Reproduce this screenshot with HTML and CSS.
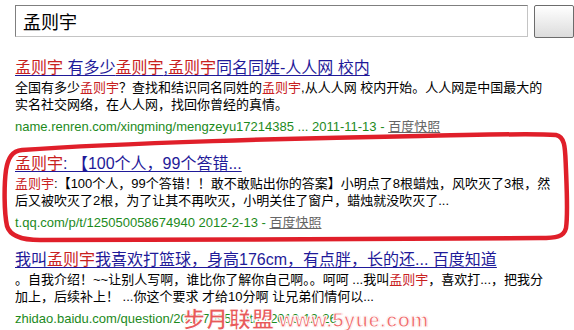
FILE: index.html
```html
<!DOCTYPE html>
<html lang="zh-CN">
<head>
<meta charset="utf-8">
<title>孟则宇 - 搜索结果</title>
<link rel="stylesheet" href="styles.css">
</head>
<body>
<div class="page">
  <div class="search">
    <div class="input">孟则宇</div>
    <div class="btn"></div>
  </div>

  <div class="results">
    <div class="result">
      <a class="title"><em>孟则宇</em> 有多少<em>孟则宇</em>,<em>孟则宇</em>同名同姓-人人网 校内</a>
      <div class="abs">全国有多少<em>孟则宇</em>？查找和结识同名同姓的<em>孟则宇</em>,从人人网 校内开始。人人网是中国最大的<br>实名社交网络，在人人网，找回你曾经的真情。</div>
      <div class="url">name.renren.com/xingming/mengzeyu17214385 ... 2011-11-13 - <a class="cache">百度快照</a></div>
    </div>

    <div class="result">
      <a class="title"><em>孟则宇</em>: 【100个人，99个答错...</a>
      <div class="abs"><em>孟则宇</em>:【100个人，99个答错！！敢不敢贴出你的答案】小明点了8根蜡烛，风吹灭了3根，然<br>后又被吹灭了2根，为了让其不再吹灭，小明关住了窗户，蜡烛就没吹灭了...</div>
      <div class="url">t.qq.com/p/t/125050058674940 2012-2-13 - <a class="cache">百度快照</a></div>
    </div>

    <div class="result">
      <a class="title">我叫<em>孟则宇</em>我喜欢打篮球，身高176cm，有点胖，长的还... 百度知道</a>
      <div class="abs">。自我介绍！~~让别人写啊，谁比你了解你自己啊。。呵呵 ...我叫<em>孟则宇</em>，喜欢打...，把我分<br>加上，后续补上！ ...你这个要求 才给10分啊 让兄弟们情何以...</div>
      <div class="url">zhidao.baidu.com/question/209070957.html 2010-12-26</div>
    </div>
  </div>

  <svg class="circle" width="574" height="330" viewBox="0 0 574 330">
    <path d="M22 150 C 120 143, 300 138, 420 136 C 480 135, 530 133, 556 135 C 566 137, 565 150, 566 170 C 567 195, 568 215, 566 228 C 564 237, 556 238, 540 238 C 400 239, 200 240, 40 240 C 22 240, 10 236, 7 226 C 4 212, 4 185, 6 170 C 8 158, 12 151, 22 150 Z" />
  </svg>

  <div class="watermark"><span class="wm-cn">步月联盟</span><span class="wm-en">www.5yue.com</span></div>
</div>
</body>
</html>
```

FILE: styles.css
```css
html, body {
  margin: 0;
  padding: 0;
  background: #ffffff;
}

.page {
  position: relative;
  width: 574px;
  height: 330px;
  overflow: hidden;
  font-family: "Liberation Sans", "Noto Sans CJK SC", sans-serif;
  font-size: 13px;
  color: #000;
}

.search {
  display: flex;
  gap: 6px;
  padding: 5px 0 0 15px;
}

.input {
  box-sizing: border-box;
  width: 534px;
  height: 32px;
  border-top: 1px solid #7f7f7f;
  border-left: 1px solid #7f7f7f;
  border-right: 1px solid #c4c4c4;
  border-bottom: 1px solid #c4c4c4;
  padding: 0 0 0 7px;
  font-family: "Noto Sans CJK SC", sans-serif;
  font-size: 18px;
  line-height: 30px;
  color: #000;
}

.btn {
  box-sizing: border-box;
  flex: none;
  width: 40px;
  height: 33px;
  border: 1px solid #6c6c6c;
  border-radius: 2px;
  background: linear-gradient(#ffffff, #dcdcdc);
}

.results {
  padding: 19px 0 0 15px;
}

.result {
  height: 96px;
}

.title {
  display: block;
  font-family: "Liberation Sans", "Noto Sans CJK SC", sans-serif;
  font-size: 16px;
  line-height: 22px;
  color: #1f1a99;
  text-decoration: underline;
  text-underline-offset: 2px;
  white-space: nowrap;
}

em {
  font-style: normal;
  color: #c8201e;
}

.abs {
  font-size: 13px;
  line-height: 17px;
  white-space: nowrap;
}

.url {
  margin-top: 4px;
  font-size: 13px;
  line-height: 20px;
  color: #1c8a1c;
  white-space: nowrap;
}

.cache {
  color: #666666;
  text-decoration: underline;
}

.circle {
  position: absolute;
  left: 0;
  top: 0;
  pointer-events: none;
}

.circle path {
  fill: none;
  stroke: #e01f2a;
  stroke-width: 4.5;
  stroke-linejoin: round;
}

.watermark {
  position: absolute;
  left: 183px;
  top: 303px;
  display: flex;
  align-items: baseline;
  gap: 4px;
  white-space: nowrap;
  pointer-events: none;
}

.wm-cn {
  font-family: "Noto Sans CJK SC", sans-serif;
  font-weight: 900;
  font-size: 22px;
  line-height: 28px;
  color: rgba(228, 60, 60, 0.85);
  -webkit-text-stroke: 1px #ffffff;
  text-shadow: 0 0 2px #fff;
  letter-spacing: 1px;
}

.wm-en {
  font-family: "Liberation Sans", sans-serif;
  font-weight: 900;
  font-size: 20px;
  line-height: 24px;
  letter-spacing: 0.5px;
  color: rgba(240, 100, 100, 0.8);
  -webkit-text-stroke: 1px #ffffff;
  text-shadow: 0 0 1px #f08080;
}
```
